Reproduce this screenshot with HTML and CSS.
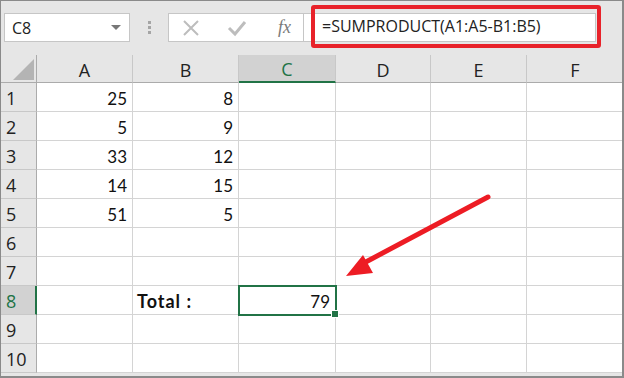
FILE: index.html
```html
<!DOCTYPE html>
<html lang="en">
<head>
  <meta charset="UTF-8">
  <title>SUMPRODUCT example</title>
  <link rel="stylesheet" href="styles.css">
</head>
<body>
  <div class="frame">
    <div class="toolbar">
      <div class="namebox">
        <span>C8</span>
        <span class="caret"></span>
      </div>
      <div class="grip"><i></i><i></i><i></i></div>
      <div class="fnbox">
        <svg class="ico" width="18" height="18" viewBox="0 0 18 18"><path d="M2 2 L16 16 M16 2 L2 16" stroke="#bdbdbd" stroke-width="2" fill="none"/></svg>
        <svg class="ico" width="20" height="18" viewBox="0 0 20 18"><path d="M2 9 L8 15 L18 3" stroke="#bdbdbd" stroke-width="3" fill="none"/></svg>
        <span class="fx">fx</span>
      </div>
      <div class="formula">=SUMPRODUCT(A1:A5-B1:B5)</div>
      <div class="callout"></div>
    </div>

    <div class="sheet" id="sheet"></div>

    <svg class="arrow" width="624" height="378" viewBox="0 0 624 378">
      <path d="M488 197 L362 264" stroke="#ed1c24" stroke-width="5" stroke-linecap="round" fill="none"/>
      <path d="M346 276 L363 255 L373 273 Z" fill="#ed1c24"/>
    </svg>
  </div>

  <script>
    const cols = ['A', 'B', 'C', 'D', 'E', 'F'];
    const data = {
      1: ['25', '8'], 2: ['5', '9'], 3: ['33', '12'], 4: ['14', '15'], 5: ['51', '5']
    };
    let html = '<div class="corner"><span></span></div>';
    cols.forEach(c => html += `<div class="colhead${c === 'C' ? ' active' : ''}">${c}</div>`);
    for (let r = 1; r <= 10; r++) {
      html += `<div class="rowhead${r === 8 ? ' active' : ''}">${r}</div>`;
      cols.forEach((c, i) => {
        let val = '';
        let cls = 'cell';
        if (data[r] && i < 2) { val = data[r][i]; cls += ' num'; }
        if (r === 8 && c === 'B') { val = 'Total :'; cls += ' label'; }
        if (r === 8 && c === 'C') { val = '79'; cls += ' num selected'; }
        html += `<div class="${cls}">${val}</div>`;
      });
    }
    document.getElementById('sheet').innerHTML = html;
  </script>
</body>
</html>
```

FILE: styles.css
```css
* {
  box-sizing: border-box;
}
body {
  margin: 0;
  font-family: "Open Sans", Arial, sans-serif;
}
.frame {
  position: relative;
  width: 624px;
  height: 378px;
  background: #e6e6e6;
  border: 1px solid #8a8a8a;
  border-right-width: 2px;
  border-bottom-width: 2px;
  overflow: hidden;
}
.toolbar {
  position: relative;
  height: 54px;
  display: flex;
  align-items: flex-start;
  padding: 12px 0 0 3px;
}
.namebox {
  width: 126px;
  height: 29px;
  background: #fff;
  border: 1px solid #c6c6c6;
  display: flex;
  align-items: center;
  justify-content: space-between;
  padding: 0 8px 0 7px;
  font-size: 16px;
  color: #222;
}
.caret {
  width: 0;
  height: 0;
  border-left: 5px solid transparent;
  border-right: 5px solid transparent;
  border-top: 5px solid #777;
}
.grip {
  width: 38px;
  height: 29px;
  display: flex;
  flex-direction: column;
  align-items: center;
  justify-content: center;
  gap: 2px;
}
.grip i {
  width: 3px;
  height: 3px;
  background: #a5a5a5;
}
.fnbox {
  width: 136px;
  height: 29px;
  background: #fff;
  border: 1px solid #c6c6c6;
  display: flex;
  align-items: center;
  padding: 0 0 0 13px;
  gap: 27px;
}
.fx {
  font-family: "Liberation Serif", serif;
  font-style: italic;
  font-size: 18px;
  color: #7a7a7a;
  margin-left: 4px;
}
.formula {
  width: 292px;
  height: 29px;
  background: #fff;
  border: 1px solid #c6c6c6;
  border-left: none;
  padding: 1px 0 0 18px;
  font-size: 16px;
  color: #222;
  white-space: nowrap;
}
.callout {
  position: absolute;
  left: 310px;
  top: 4px;
  width: 290px;
  height: 43px;
  border: 4px solid #e8222a;
  border-radius: 3px;
}
.sheet {
  display: grid;
  grid-template-columns: 36px 96px 106px 97px 95px 96px 97px;
  grid-template-rows: 28px repeat(10, 29px);
  background: #fff;
  font-family: Lato, "Open Sans", sans-serif;
  font-size: 17px;
  color: #111;
}
.corner, .colhead, .rowhead {
  background: #e6e6e6;
  color: #222;
  font-family: "Open Sans", sans-serif;
  font-size: 18px;
}
.corner {
  border-right: 1px solid #ababab;
  border-bottom: 1px solid #ababab;
  position: relative;
}
.corner span {
  position: absolute;
  right: 2px;
  bottom: 2px;
  width: 0;
  height: 0;
  border-left: 21px solid transparent;
  border-bottom: 21px solid #b4b4b4;
}
.colhead {
  display: flex;
  align-items: center;
  justify-content: center;
  border-right: 1px solid #c8c8c8;
  border-bottom: 1px solid #ababab;
  padding-top: 2px;
}
.colhead.active {
  background: #d2d2d2;
  color: #217346;
  border-bottom: 2px solid #217346;
}
.rowhead {
  display: flex;
  align-items: center;
  padding: 1px 0 0 5px;
  border-right: 1px solid #ababab;
  border-bottom: 1px solid #c8c8c8;
}
.rowhead.active {
  background: #d2d2d2;
  color: #217346;
  border-right: 2px solid #217346;
}
.cell {
  border-right: 1px solid #d4d4d4;
  border-bottom: 1px solid #d4d4d4;
  display: flex;
  align-items: flex-end;
  padding: 0 5px 2px 4px;
  white-space: nowrap;
}
.num {
  justify-content: flex-end;
}
.label {
  font-weight: bold;
  font-size: 18px;
  letter-spacing: 1px;
}
.selected {
  position: relative;
  outline: 2px solid #217346;
  outline-offset: -1px;
  z-index: 1;
}
.selected::after {
  content: "";
  position: absolute;
  right: -4px;
  bottom: -4px;
  width: 6px;
  height: 6px;
  background: #217346;
  border: 1px solid #fff;
}
.arrow {
  position: absolute;
  left: -1px;
  top: -1px;
  pointer-events: none;
}
```
